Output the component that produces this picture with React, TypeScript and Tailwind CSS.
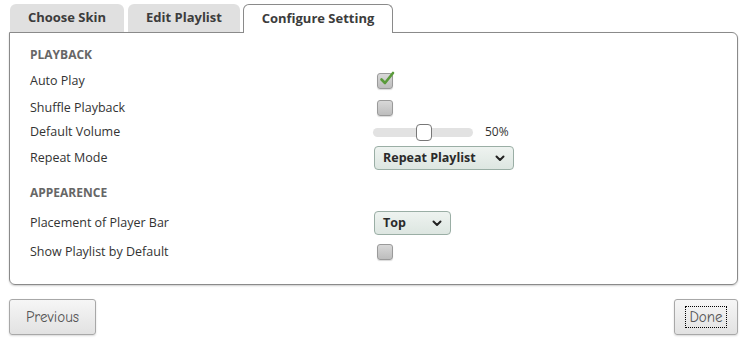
import React from "react";

function Checkbox({ checked }: { checked?: boolean }) {
  return (
    <div className="relative w-[16px] h-[16px] rounded-[3px] border border-[#9a9a9a] bg-gradient-to-b from-[#d8d8d8] to-[#bdbdbd] shadow-[0_1px_1px_rgba(0,0,0,0.15)]">
      {checked && (
        <svg className="absolute left-[1px] top-[-4px]" width="16" height="16" viewBox="0 0 16 16">
          <path d="M2.5 9.5 L6 13 L14 3" fill="none" stroke="#5a9a3a" strokeWidth="2.6" strokeLinecap="round" strokeLinejoin="round" />
        </svg>
      )}
    </div>
  );
}

function Select({ label, w }: { label: string; w: string }) {
  return (
    <div className={`${w} h-[24px] flex items-center justify-between pl-[8px] pr-[8px] rounded-[4px] border border-[#9aaea5] bg-gradient-to-b from-[#eef3f0] to-[#dde6e1] text-[12.5px] font-bold text-[#2a2a2a]`}>
      <span>{label}</span>
      <svg width="10" height="7" viewBox="0 0 10 7">
        <path d="M1.5 1.5 L5 5 L8.5 1.5" fill="none" stroke="#222" strokeWidth="2" strokeLinecap="round" strokeLinejoin="round" />
      </svg>
    </div>
  );
}

function Row({ label, children, h }: { label: string; children?: React.ReactNode; h: string }) {
  return (
    <div className={`flex items-center ${h}`}>
      <div className="w-[343px] text-[12.5px] text-[#333]">{label}</div>
      <div className="flex items-center">{children}</div>
    </div>
  );
}

export default function App() {
  return (
    <div className="w-[747px] h-[347px] bg-white font-['Open_Sans',sans-serif] relative">
      <div className="pt-[3px] pl-[10px] flex items-end h-[32px]">
        <div className="w-[114px] h-[28px] rounded-t-[6px] bg-[#e0e0e0] flex items-center justify-center text-[13px] font-bold text-[#3c3c3c]">Choose Skin</div>
        <div className="ml-[4px] w-[112px] h-[28px] rounded-t-[6px] bg-[#e0e0e0] flex items-center justify-center text-[13px] font-bold text-[#3c3c3c]">Edit Playlist</div>
        <div className="ml-[3px] relative z-10 w-[150px] h-[29px] rounded-t-[6px] bg-white border border-b-0 border-[#8a8a8a] flex items-center justify-center text-[13px] font-bold text-[#3c3c3c] mb-[-1px]">Configure Setting</div>
      </div>
      <div className="ml-[9px] w-[729px] h-[253px] border border-[#8a8a8a] rounded-b-[6px] rounded-tr-[6px] shadow-[0_1px_2px_rgba(0,0,0,0.2)] pl-[20px] pt-[12px]">
        <div className="h-[20px] flex items-center text-[12px] font-bold text-[#666]">PLAYBACK</div>
        <Row label="Auto Play" h="h-[32px]"><div className="ml-[4px]"><Checkbox checked /></div></Row>
        <Row label="Shuffle Playback" h="h-[22px]"><div className="ml-[4px]"><Checkbox /></div></Row>
        <Row label="Default Volume" h="h-[26px]">
          <div className="relative w-[100px] h-[9px] rounded-full bg-[#e2e2e2]">
            <div className="absolute left-[43px] top-[-4px] w-[16px] h-[17px] rounded-[4px] border border-[#777] bg-white" />
          </div>
          <span className="ml-[12px] text-[12px] text-[#333]">50%</span>
        </Row>
        <Row label="Repeat Mode" h="h-[26px]"><div className="ml-[1px]"><Select label="Repeat Playlist" w="w-[140px]" /></div></Row>
        <div className="mt-[11px] h-[22px] flex items-center text-[12px] font-bold text-[#666]">APPEARENCE</div>
        <Row label="Placement of Player Bar" h="h-[38px]"><div className="ml-[1px]"><Select label="Top" w="w-[77px]" /></div></Row>
        <Row label="Show Playlist by Default" h="h-[20px]"><div className="ml-[4px]"><Checkbox /></div></Row>
      </div>
      <div className="flex justify-between px-[9px] pt-[14px]">
        <button className="w-[87px] h-[36px] rounded-[3px] border border-[#a8a8a8] bg-gradient-to-b from-[#f6f6f6] to-[#e2e2e2] shadow-[0_1px_2px_rgba(0,0,0,0.15)] text-[15px] text-[#555] font-['Comic_Sans_MS','Comic_Neue',cursive]">Previous</button>
        <button className="w-[64px] h-[36px] rounded-[3px] border border-[#a8a8a8] bg-gradient-to-b from-[#f6f6f6] to-[#e2e2e2] shadow-[0_1px_2px_rgba(0,0,0,0.15)] text-[15px] text-[#555] font-['Comic_Sans_MS','Comic_Neue',cursive] flex items-center justify-center">
          <span className="border border-dotted border-black px-[3px] leading-[20px]">Done</span>
        </button>
      </div>
    </div>
  );
}
